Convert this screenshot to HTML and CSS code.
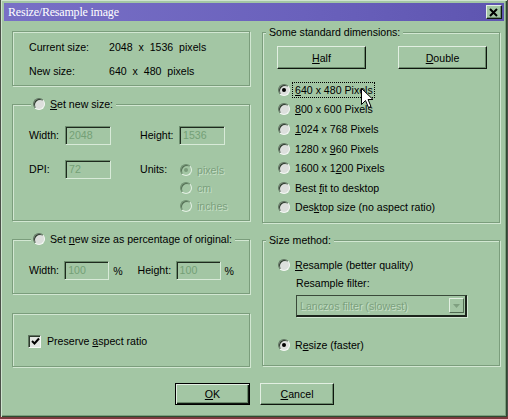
FILE: index.html
```html
<!DOCTYPE html>
<html>
<head>
<meta charset="utf-8">
<link rel="stylesheet" href="styles.css">
</head>
<body>
<div class="win">
  <div class="titlebar">
    <span class="title">Resize/Resample image</span>
    <span class="close"><svg width="10" height="9" viewBox="0 0 10 9"><path d="M1 1 L8 8 M8 1 L1 8" stroke="#000" stroke-width="2"/></svg></span>
  </div>
  <div class="cols">
    <div class="col">
      <div class="group g1">
        <div class="info"><span class="ilbl">Current size:</span><span class="pre">2048  x  1536  pixels</span></div>
        <div class="info"><span class="ilbl">New size:</span><span class="pre">640  x  480  pixels</span></div>
      </div>
      <div class="group g2">
        <div class="legend lg-radio"><span class="radio"></span><span><u>S</u>et new size:</span></div>
        <div class="sizegrid">
          <span class="flbl">Width:</span><span class="input dis">2048</span><span></span><span class="flbl">Height:</span><span class="input dis">1536</span>
          <span class="flbl">DPI:</span><span class="input dis">72</span><span></span><span class="flbl">Units:</span>
          <div class="units">
            <div class="uitem"><span class="radio off checked"></span><span class="distext">pixels</span></div>
            <div class="uitem"><span class="radio off"></span><span class="distext">cm</span></div>
            <div class="uitem"><span class="radio off"></span><span class="distext">inches</span></div>
          </div>
        </div>
      </div>
      <div class="group g3">
        <div class="legend lg-radio"><span class="radio"></span><span>Set <u>n</u>ew size as percentage of original:</span></div>
        <div class="pctrow">
          <span class="flbl w36">Width:</span><span class="input dis">100</span><span class="pct">%</span>
          <span class="flbl w39">Height:</span><span class="input dis">100</span><span class="pct">%</span>
        </div>
      </div>
      <div class="group g4">
        <div class="chkrow"><span class="check"><svg width="9" height="9" viewBox="0 0 9 9"><path d="M1 4 L3.5 6.5 L8 1.5" stroke="#000" stroke-width="2" fill="none"/></svg></span><span>Preserve <u>a</u>spect ratio</span></div>
      </div>
    </div>
    <div class="col right">
      <div class="group gA">
        <div class="legend lg-text">Some standard dimensions:</div>
        <div class="btnrow">
          <span class="btn wide"><u>H</u>alf</span>
          <span class="btn wide"><u>D</u>ouble</span>
        </div>
        <div class="rlist">
          <div class="ritem"><span class="radio checked"></span><span class="focus"><u>6</u>40 x 480 Pixels</span>
            <svg class="cursor" width="13" height="21" viewBox="0 0 13 21"><path d="M0.5 0.5 L0.5 16.5 L4.5 12.5 L7.5 19.5 L10 18.5 L7 11.5 L12 11.5 Z" fill="#fff" stroke="#000" stroke-width="1"/></svg>
          </div>
          <div class="ritem"><span class="radio"></span><span><u>8</u>00 x 600 Pixels</span></div>
          <div class="ritem"><span class="radio"></span><span><u>1</u>024 x 768 Pixels</span></div>
          <div class="ritem"><span class="radio"></span><span>1280 x <u>9</u>60 Pixels</span></div>
          <div class="ritem"><span class="radio"></span><span>1600 x 1<u>2</u>00 Pixels</span></div>
          <div class="ritem"><span class="radio"></span><span>Best <u>f</u>it to desktop</span></div>
          <div class="ritem"><span class="radio"></span><span>Des<u>k</u>top size (no aspect ratio)</span></div>
        </div>
      </div>
      <div class="group gB">
        <div class="legend lg-text">Size method:</div>
        <div class="ritem r1"><span class="radio"></span><span><u>R</u>esample (better quality)</span></div>
        <div class="filterlbl">Resample filter:</div>
        <div class="select"><span class="seltext">Lanczos filter (slowest)</span><span class="selbtn"><svg width="7" height="4" viewBox="0 0 7 4"><path d="M0 0 L7 0 L3.5 4 Z" fill="#7fa080"/></svg></span></div>
        <div class="ritem r2"><span class="radio checked"></span><span>R<u>e</u>size (faster)</span></div>
      </div>
    </div>
  </div>
  <div class="actions">
    <span class="btn def"><u>O</u>K</span>
    <span class="btn cancel"><u>C</u>ancel</span>
  </div>
</div>
</body>
</html>
```

FILE: styles.css
```css
html, body {
  margin: 0;
  padding: 0;
}
body {
  width: 508px;
  height: 419px;
  background: linear-gradient(to bottom, #4a4f48 0, #4a4f48 416px, #7a3a3e 416px);
  overflow: hidden;
}
.win {
  box-sizing: border-box;
  margin-left: 1px;
  width: 506px;
  height: 417px;
  padding: 3px 3px 0 3px;
  background: #a3c6a4;
  box-shadow: inset 1px 1px 0 #cfe4cf, inset -1px -1px 0 #2e4a30, inset -2px -2px 0 #7c9e7d;
  font-family: "Liberation Sans", Arial, sans-serif;
  font-size: 10.6px;
  color: #000;
  display: flex;
  flex-direction: column;
  white-space: nowrap;
}
u { text-decoration: underline; text-underline-offset: 1px; }
.titlebar {
  height: 18px;
  background: linear-gradient(to right, #7870c6, #6a61bc 60%, #5e55b0);
  display: flex;
  align-items: center;
  justify-content: space-between;
  padding: 0 2px 0 4px;
}
.title {
  font-family: "Liberation Serif", "Times New Roman", serif;
  font-size: 12px;
  letter-spacing: -0.2px;
  color: #fff;
}
.close {
  box-sizing: border-box;
  width: 16px;
  height: 14px;
  background: #a3c6a4;
  border: 1px solid;
  border-color: #e4f0e4 #101810 #101810 #e4f0e4;
  box-shadow: inset -1px -1px 0 #6f8f70;
  display: flex;
  align-items: center;
  justify-content: center;
}
.cols {
  display: flex;
  gap: 12px;
  padding-left: 8px;
  margin-top: 10px;
}
.col {
  width: 238px;
  display: flex;
  flex-direction: column;
}
.col.right { padding-top: 1px; }
.group {
  box-sizing: border-box;
  border: 1px solid #7b9d7c;
  box-shadow: inset 1px 1px 0 #d2e7d2, 1px 1px 0 #d2e7d2;
  display: flex;
  flex-direction: column;
}
.legend {
  background: #a3c6a4;
  align-self: flex-start;
  height: 14px;
  margin-top: -8px;
  display: flex;
  align-items: center;
  line-height: 14px;
}
.lg-radio { margin-left: 18px; padding: 0 3px 0 2px; gap: 5px; }
.lg-text { margin-left: 3px; padding: 0 3px 0 3px; }
.g1 { height: 55px; padding: 8px 0 0 16px; gap: 10px; }
.g2 { height: 117px; margin-top: 18px; }
.g3 { height: 55px; margin-top: 18px; }
.g4 { height: 54px; margin-top: 19px; padding: 20px 0 0 15px; }
.gA { height: 191px; }
.gB { height: 126px; margin-top: 17px; }
.info { display: flex; height: 14px; line-height: 14px; }
.ilbl { width: 80px; }
.pre { white-space: pre; }

.radio {
  box-sizing: border-box;
  width: 12px;
  height: 12px;
  border-radius: 50%;
  background: #dcdfdc;
  border: 1px solid;
  border-color: #5f7460 #f4f8f4 #f4f8f4 #5f7460;
  box-shadow: inset 1px 1px 0 #2c3a2c;
  flex: none;
  position: relative;
}
.radio.checked::after {
  content: "";
  position: absolute;
  left: 3px;
  top: 3px;
  width: 4px;
  height: 4px;
  border-radius: 50%;
  background: #000;
}
.radio.off {
  background: #a3c6a4;
  border-color: #6f8f70 #e4f0e4 #e4f0e4 #6f8f70;
  box-shadow: inset 1px 1px 0 #557056;
}
.radio.off.checked::after { background: #7a9c7b; }

.sizegrid {
  display: grid;
  grid-template-columns: 36px 46px 29px 39px 46px;
  grid-template-rows: 19px auto;
  row-gap: 15px;
  margin: 15px 0 0 16px;
  align-items: start;
}
.units { display: flex; flex-direction: column; }
.uitem {
  display: flex;
  align-items: center;
  height: 18px;
  gap: 5px;
  padding-left: 1px;
}
.uitem:first-child { margin-top: 1px; }
.flbl { line-height: 19px; }
.input {
  box-sizing: border-box;
  height: 19px;
  width: 46px;
  border: 1px solid;
  border-color: #6d8d6e #d8ead8 #d8ead8 #6d8d6e;
  box-shadow: inset 1px 1px 0 #1e2a1e;
  padding: 0 0 0 3px;
  line-height: 17px;
  color: #74a076;
}
.distext {
  color: #7ba07d;
  text-shadow: 1px 1px 0 #c8e0c8;
}
.pctrow {
  display: flex;
  align-items: center;
  margin: 15px 0 0 16px;
  height: 19px;
}
.w36 { width: 36px; }
.w39 { width: 39px; }
.pct { width: 29px; padding-left: 4px; box-sizing: border-box; }
.chkrow { display: flex; align-items: center; gap: 6px; height: 14px; }
.check {
  box-sizing: border-box;
  width: 13px;
  height: 13px;
  background: #e2e6e2;
  border: 1px solid;
  border-color: #5f7460 #f4f8f4 #f4f8f4 #5f7460;
  box-shadow: inset 1px 1px 0 #2c3a2c;
  display: flex;
  align-items: center;
  justify-content: center;
  padding: 1px 0 0 1px;
}

.btnrow {
  display: flex;
  gap: 32px;
  margin: 7px 0 0 14px;
}
.btn {
  box-sizing: border-box;
  display: flex;
  align-items: center;
  justify-content: center;
  border: 1px solid;
  border-color: #e2efe2 #0e160e #0e160e #e2efe2;
  box-shadow: inset -1px -1px 0 #6b8b6c;
  background: #a3c6a4;
}
.btn.wide { width: 89px; height: 23px; }
.rlist {
  display: flex;
  flex-direction: column;
  margin: 11px 0 0 15px;
}
.ritem {
  display: flex;
  align-items: center;
  height: 19.6px;
  gap: 4px;
  position: relative;
}
.ritem > span:nth-child(2) { padding-left: 1px; }
.focus {
  outline: 1px dotted #000;
  outline-offset: 1px;
  line-height: 12px;
}
.cursor {
  position: absolute;
  left: 83px;
  top: 8px;
}
.gB .r1 { margin: 9px 0 0 15px; height: 18px; }
.filterlbl { margin: 2px 0 0 33px; height: 14px; line-height: 14px; }
.select {
  box-sizing: border-box;
  width: 171px;
  height: 22px;
  margin: 5px 0 0 33px;
  border-style: solid;
  border-width: 1px 2px 2px 1px;
  border-color: #3a4a3a #1c241c #1c241c #3a4a3a;
  box-shadow: 1px 1px 0 #d2e7d2;
  display: flex;
  align-items: center;
  justify-content: space-between;
  padding: 0 1px 0 3px;
}
.seltext {
  color: #7ba07d;
  text-shadow: 1px 1px 0 #c8e0c8;
}
.selbtn {
  box-sizing: border-box;
  width: 15px;
  height: 15px;
  border: 1px solid;
  border-color: #e2efe2 #4f6a50 #4f6a50 #e2efe2;
  display: flex;
  align-items: center;
  justify-content: center;
}
.gB .r2 { margin: 19px 0 0 15px; height: 18px; }

.actions {
  display: flex;
  gap: 10px;
  padding-left: 171px;
  margin-top: 16px;
}
.btn.def {
  width: 75px;
  height: 22px;
  border: 1px solid #000;
  box-shadow: inset 1px 1px 0 #e2efe2, inset -1px -1px 0 #101810, inset -2px -2px 0 #6b8b6c;
}
.btn.cancel { width: 74px; height: 22px; }
```
